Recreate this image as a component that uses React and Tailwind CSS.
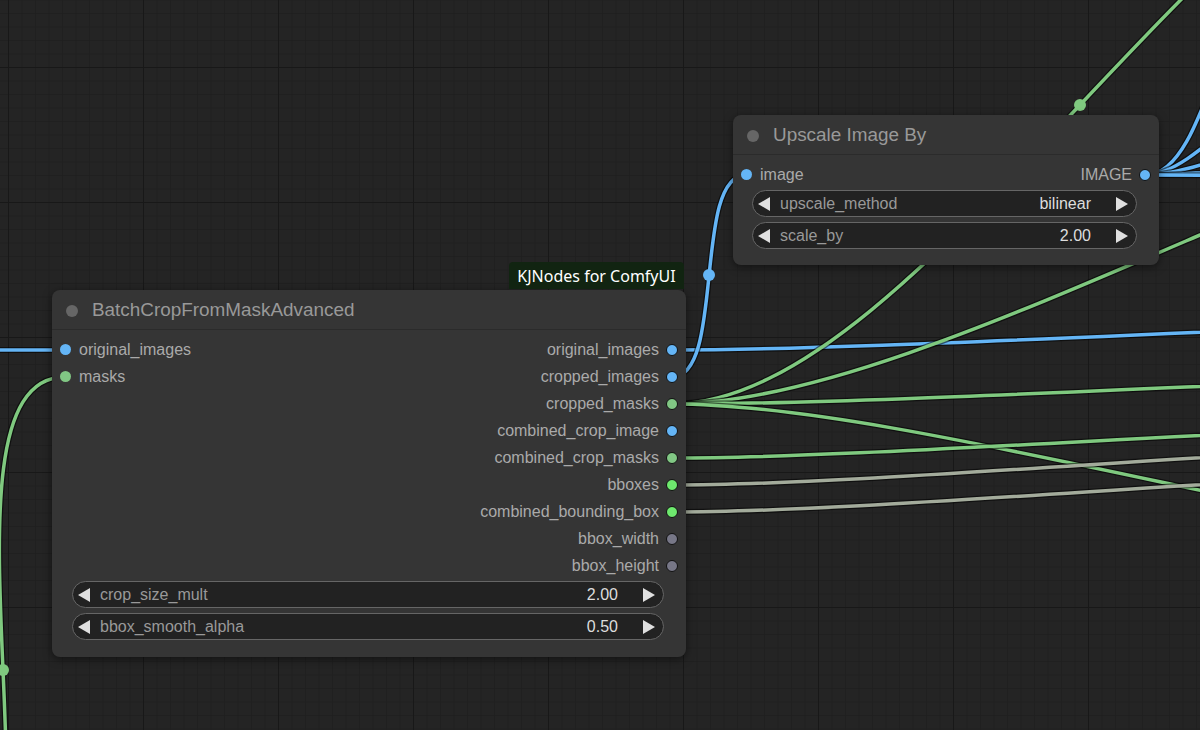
import React from "react";

function bez(x0, y0, x3, y3) {
  const d = 0.25 * Math.hypot(x3 - x0, y3 - y0);
  return `M${x0} ${y0} C${x0 + d} ${y0} ${x3 - d} ${y3} ${x3} ${y3}`;
}

const BLUE = "#64b5f6";
const GREEN = "#7fc97f";
const GREY = "#a3ab9b";

const links = [
  { d: "M-20 350 L65 350", c: BLUE },
  { d: bez(-59, 963, 65, 377), c: GREEN },
  { d: bez(672, 350, 1600, 320), c: BLUE },
  { d: bez(672, 377, 746, 175), c: BLUE },
  { d: bez(672, 404, 1488, -194), c: GREEN },
  { d: bez(672, 404, 1700, 78), c: GREEN },
  { d: bez(672, 404, 1700, 370), c: GREEN },
  { d: bez(672, 404, 1650, 560), c: GREEN },
  { d: bez(672, 458, 1500, 425), c: GREEN },
  { d: bez(672, 485, 1500, 445), c: GREY },
  { d: bez(672, 512, 1500, 472), c: GREY },
  { d: bez(1146, 175, 1290, -40), c: BLUE },
  { d: bez(1146, 175, 1320, 70), c: BLUE },
  { d: bez(1146, 175, 1350, 125), c: BLUE },
  { d: bez(1146, 175, 1400, 160), c: BLUE },
  { d: bez(1146, 175, 1400, 176), c: BLUE },
];

function Canvas() {
  return (
    <svg className="absolute inset-0" width="1200" height="730">
      <defs>
        <pattern id="minor" width="13.5" height="13.5" patternUnits="userSpaceOnUse" patternTransform="translate(8 67)">
          <path d="M0 0 V13.5 M0 0 H13.5" stroke="#1c1c1c" strokeWidth="1" fill="none" />
        </pattern>
        <pattern id="major" width="135" height="135" patternUnits="userSpaceOnUse" patternTransform="translate(8 67)">
          <path d="M0 0 V135 M0 0 H135" stroke="#181818" strokeWidth="2" fill="none" />
        </pattern>
      </defs>
      <rect width="1200" height="730" fill="#242424" />
      <rect width="1200" height="730" fill="url(#minor)" />
      <rect width="1200" height="730" fill="url(#major)" />
      {links.map((l, i) => (
        <g key={i}>
          <path d={l.d} stroke="#000" strokeOpacity="0.55" strokeWidth="6" fill="none" />
          <path d={l.d} stroke={l.c} strokeWidth="3.5" fill="none" />
        </g>
      ))}
      <circle cx="709" cy="275" r="6" fill={BLUE} />
      <circle cx="1080" cy="105" r="6" fill={GREEN} />
      <circle cx="3" cy="670" r="6" fill={GREEN} />
    </svg>
  );
}

function Dot({ color, outline }) {
  return (
    <span
      className={
        outline
          ? "block h-[12px] w-[12px] shrink-0 rounded-full border border-[#111]"
          : "block h-[11px] w-[11px] shrink-0 rounded-full"
      }
      style={{ backgroundColor: color }}
    />
  );
}

function Header({ title }) {
  return (
    <div className="flex h-[40px] items-center border-b border-[#2b2b2b] pl-[14px] pt-[2px]">
      <span className="block h-[12px] w-[12px] rounded-full bg-[#666]" />
      <span className="ml-[14px] text-[18.9px] text-[#999]">{title}</span>
    </div>
  );
}

function LeftArrow() {
  return (
    <svg width="12" height="14" viewBox="0 0 12 14">
      <polygon points="12,0 12,14 0,7" fill="#e0e0e0" />
    </svg>
  );
}
function RightArrow() {
  return (
    <svg width="12" height="14" viewBox="0 0 12 14">
      <polygon points="0,0 0,14 12,7" fill="#e0e0e0" />
    </svg>
  );
}

function Widget({ label, value }) {
  return (
    <div className="flex h-[27px] items-center rounded-full border border-[#666] bg-[#222] pl-[5px] pr-[8px] text-[16px]">
      <LeftArrow />
      <span className="ml-[10px] text-[#999]">{label}</span>
      <span className="ml-auto text-[#ddd]">{value}</span>
      <span className="ml-[25px]"><RightArrow /></span>
    </div>
  );
}

function InRow({ label, color }) {
  return (
    <div className="flex h-[27px] items-center pl-[7.5px]">
      <Dot color={color} />
      <span className="ml-[8.5px] text-[#aaa]">{label}</span>
    </div>
  );
}

function OutRow({ label, color }) {
  return (
    <div className="flex h-[27px] items-center justify-end pr-[8px]">
      <span className="mr-[7px] text-[#aaa]">{label}</span>
      <Dot color={color} outline />
    </div>
  );
}

function BatchNode() {
  const outs = [
    ["original_images", BLUE],
    ["cropped_images", BLUE],
    ["cropped_masks", "#81c784"],
    ["combined_crop_image", BLUE],
    ["combined_crop_masks", "#81c784"],
    ["bboxes", "#6ee96e"],
    ["combined_bounding_box", "#6ee96e"],
    ["bbox_width", "#777787"],
    ["bbox_height", "#777787"],
  ];
  return (
    <div className="absolute left-[52px] top-[290px] w-[634px] rounded-[8px] bg-[#353535] text-[16px] shadow-[0_2px_8px_rgba(0,0,0,0.5)]">
      <Header title="BatchCropFromMaskAdvanced" />
      <div className="flex pt-[6px]">
        <div className="flex-1">
          <InRow label="original_images" color={BLUE} />
          <InRow label="masks" color="#81c784" />
        </div>
        <div className="flex-1">
          {outs.map(([l, c]) => (
            <OutRow key={l} label={l} color={c} />
          ))}
        </div>
      </div>
      <div className="ml-[20px] mr-[22px] mt-[2px] flex flex-col gap-[5px] pb-[17px]">
        <Widget label="crop_size_mult" value="2.00" />
        <Widget label="bbox_smooth_alpha" value="0.50" />
      </div>
    </div>
  );
}

function UpscaleNode() {
  return (
    <div className="absolute left-[733px] top-[115px] w-[426px] rounded-[8px] bg-[#353535] text-[16px] shadow-[0_2px_8px_rgba(0,0,0,0.5)]">
      <Header title="Upscale Image By" />
      <div className="flex pt-[6px]">
        <div className="flex-1">
          <InRow label="image" color={BLUE} />
        </div>
        <div className="flex-1">
          <OutRow label="IMAGE" color={BLUE} />
        </div>
      </div>
      <div className="ml-[19px] mr-[22px] mt-[2px] flex flex-col gap-[5px] pb-[16px]">
        <Widget label="upscale_method" value="bilinear" />
        <Widget label="scale_by" value="2.00" />
      </div>
    </div>
  );
}

export default function App() {
  return (
    <div className="relative h-[730px] w-[1200px] overflow-hidden bg-[#242424] font-['Liberation_Sans',Arial,sans-serif]">
      <Canvas />
      <UpscaleNode />
      <BatchNode />
      <div className="absolute left-[509px] top-[262px] flex h-[27px] w-[175px] items-center justify-center rounded-t-[4px] bg-[#112411] font-['Noto_Sans',sans-serif] text-[16px] text-white">
        KJNodes for ComfyUI
      </div>
    </div>
  );
}
